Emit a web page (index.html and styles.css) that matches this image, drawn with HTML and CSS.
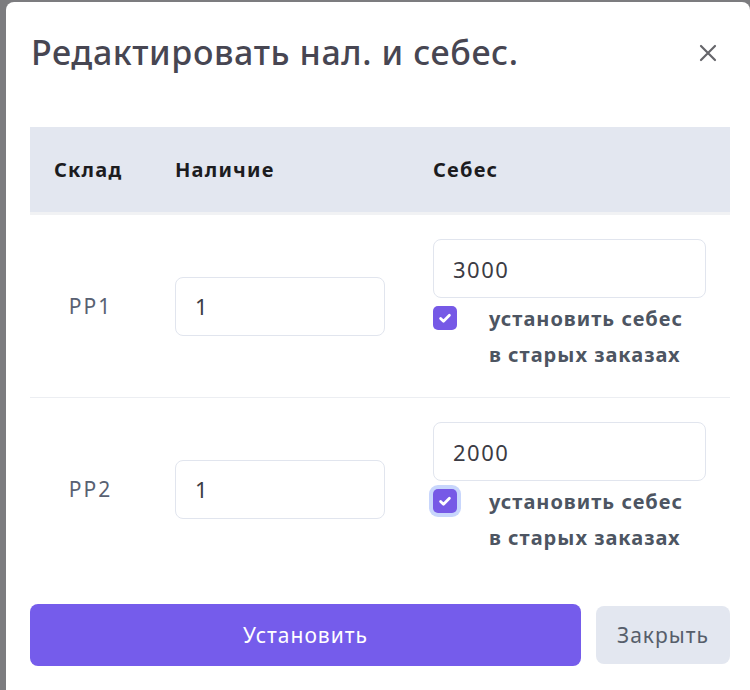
FILE: index.html
```html
<!DOCTYPE HTML>
<html>
    <head>
        <meta charset="UTF-8">
        <title>Редактировать нал. и себес.</title>
        <link rel="stylesheet" href="styles.css">
    </head>
    <body>
        <div class="backdrop">
            <div class="modal">
                <div class="modal-head">
                    <h2>Редактировать нал. и себес.</h2>
                    <span class="close"><svg viewBox="0 0 18 18" width="18" height="18"><path d="M2 2l14 14M16 2L2 16" stroke="#66666b" stroke-width="2.2" stroke-linecap="round"/></svg></span>
                </div>
                <table class="stock">
                    <thead>
                        <tr>
                            <th class="col-wh">Склад</th>
                            <th class="col-qty">Наличие</th>
                            <th class="col-cost">Себес</th>
                        </tr>
                    </thead>
                    <tbody>
                        <tr>
                            <td class="wh">PP1</td>
                            <td><input type="text" value="1"></td>
                            <td>
                                <input type="text" value="3000">
                                <div class="check">
                                    <span class="box"><svg viewBox="0 0 16 16" width="16" height="16"><path d="M3.6 8.4l2.9 2.8 5.9-5.9" fill="none" stroke="#fff" stroke-width="2.8" stroke-linecap="round" stroke-linejoin="round"/></svg></span>
                                    <span class="text">установить себес<br>в старых заказах</span>
                                </div>
                            </td>
                        </tr>
                        <tr>
                            <td class="wh">PP2</td>
                            <td><input type="text" value="1"></td>
                            <td>
                                <input type="text" value="2000">
                                <div class="check">
                                    <span class="box focus"><svg viewBox="0 0 16 16" width="16" height="16"><path d="M3.6 8.4l2.9 2.8 5.9-5.9" fill="none" stroke="#fff" stroke-width="2.8" stroke-linecap="round" stroke-linejoin="round"/></svg></span>
                                    <span class="text">установить себес<br>в старых заказах</span>
                                </div>
                            </td>
                        </tr>
                    </tbody>
                </table>
                <div class="actions">
                    <button class="btn-primary">Установить</button>
                    <button class="btn-light">Закрыть</button>
                </div>
            </div>
        </div>
    </body>
</html>
```

FILE: styles.css
```css
html,body{margin:0;padding:0;}
body{
    font-family: "Noto Sans","Open Sans",sans-serif;
    background-color: #7c7c7f;
    overflow: hidden;
}
h2{margin:0;}

.backdrop{
    width: 750px;
    height: 690px;
    padding: 2px 0 0 6px;
    box-sizing: border-box;
}
.modal{
    width: 744px;
    height: 700px;
    background: #fff;
    border-radius: 8px;
    padding: 0 20px 0 24px;
    box-sizing: border-box;
}
.modal-head{
    display: flex;
    align-items: center;
    justify-content: space-between;
    height: 100px;
    padding-left: 1px;
    padding-right: 13px;
    margin-bottom: 25px;
}
.modal-head h2{
    font-size: 34px;
    font-weight: 500;
    color: #474652;
    letter-spacing: 0.6px;
}
.close{
    display: flex;
    margin-top: 2px;
}

.stock{
    width: 700px;
    border-collapse: collapse;
}
.stock th{
    background: #e3e7f0;
    text-align: left;
    font-size: 20px;
    font-weight: 700;
    color: #1c1c1f;
    letter-spacing: 1.2px;
    height: 85px;
    padding: 0 24px;
    border-bottom: 3px solid #f1f2f4;
}
.stock .col-wh{width: 73px;}
.stock .col-qty{width: 210px;}
.stock td{
    padding: 24px;
    vertical-align: middle;
    border-bottom: 1px solid #eceef2;
}
.stock tbody tr:last-child td{border-bottom: none;}
.stock td.wh{
    text-align: center;
    font-size: 21px;
    letter-spacing: 2px;
    color: #586172;
}
.stock input{
    display: block;
    width: 100%;
    height: 59px;
    box-sizing: border-box;
    border: 1px solid #e1e5ee;
    border-radius: 8px;
    padding: 0 19px;
    font-family: inherit;
    font-size: 22px;
    letter-spacing: 1.5px;
    color: #3b3b44;
    outline: none;
}
.check{
    display: flex;
    align-items: flex-start;
    margin-top: 3px;
}
.check .box{
    flex: none;
    display: flex;
    align-items: center;
    justify-content: center;
    width: 24px;
    height: 24px;
    margin-top: 5px;
    border-radius: 5px;
    background: #7659e6;
}
.check .box.focus{
    box-shadow: 0 0 0 4px #c8d6fc;
}
.check .text{
    margin-left: 32px;
    font-size: 20px;
    font-weight: 700;
    letter-spacing: 1px;
    line-height: 36px;
    color: #4d5562;
}

.actions{
    display: flex;
    align-items: center;
    gap: 15px;
    width: 700px;
    margin-top: 24px;
}
.actions button{
    font-family: inherit;
    font-size: 21px;
    letter-spacing: 1px;
    border: none;
    border-radius: 8px;
    cursor: pointer;
}
.btn-primary{
    flex: 1;
    height: 62px;
    background: #755ceb;
    color: #fff;
}
.btn-light{
    width: 134px;
    height: 58px;
    background: #e3e7f0;
    color: #565e6b;
}
```
